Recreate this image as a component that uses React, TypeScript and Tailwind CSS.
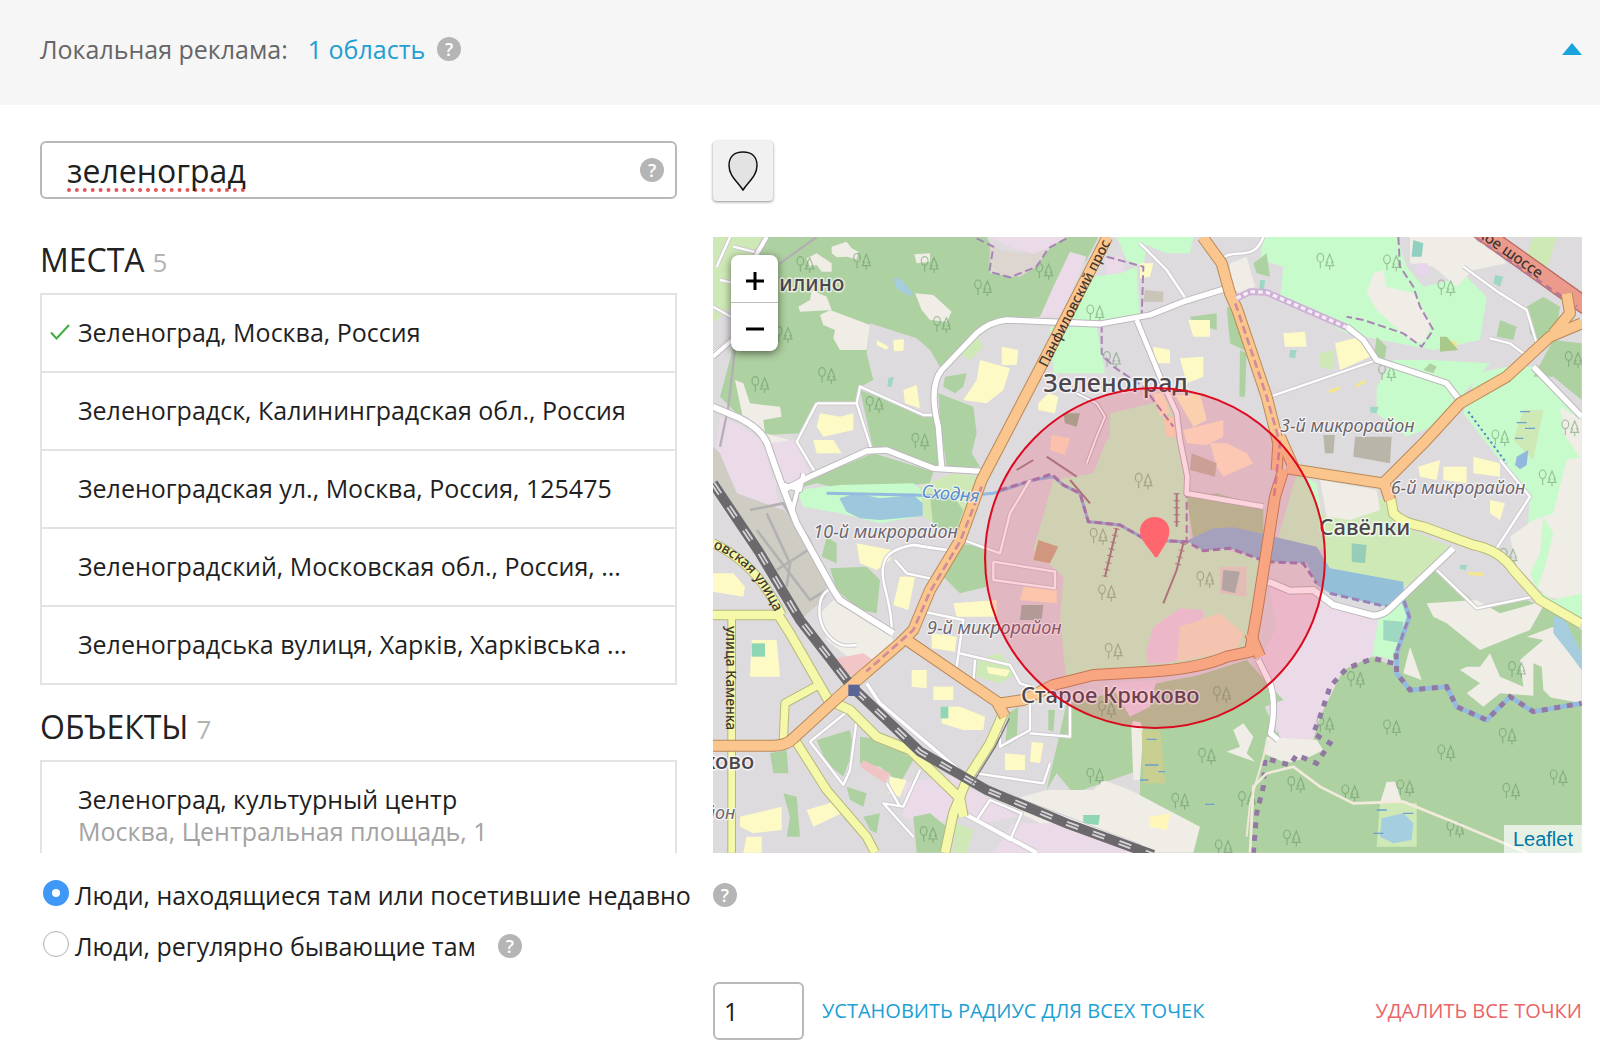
import { useState } from "react";

type Place = { title: string; note?: string; selected?: boolean };

const places: Place[] = [
  { title: "Зеленоград, Москва, Россия", selected: true },
  { title: "Зеленоградск, Калининградская обл., Россия" },
  { title: "Зеленоградская ул., Москва, Россия, 125475" },
  { title: "Зеленоградский, Московская обл., Россия, ..." },
  { title: "Зеленоградська вулиця, Харків, Харківська ..." },
];

const objects: Place[] = [
  { title: "Зеленоград, культурный центр", note: "Москва, Центральная площадь, 1" },
];

function Help({ label }: { label: string }) {
  return (
    <button
      type="button"
      aria-label={label}
      className="flex size-6 shrink-0 items-center justify-center rounded-full bg-[#b5b5b5] text-lg leading-6 font-semibold text-white"
    >
      ?
    </button>
  );
}

function Section({ title, count, items }: { title: string; count: number; items: Place[] }) {
  return (
    <section>
      <h2 className="flex h-14 items-baseline gap-2 text-[32px] leading-[46px] text-[#222]">
        {title} <span className="text-[26px] text-[#b3b3b3]">{count}</span>
      </h2>
      <ul className="border-2 border-b-0 border-[#e3e3e3]">
        {items.map((p) => (
          <li key={p.title} className="border-b-2 border-[#e3e3e3]">
            <button type="button" className="flex min-h-[76px] w-full items-center pb-0.5 text-left text-[25px] leading-8 text-[#1f1f1f]">
              <span className="flex w-9 shrink-0 justify-center">
                {p.selected && (
                  <svg width="20" height="16" viewBox="0 0 20 16" fill="none" stroke="#3fae3f" strokeWidth="2" aria-hidden="true">
                    <path d="M1 8.5 6.5 14.5 19 1" />
                  </svg>
                )}
              </span>
              <span className={p.note ? "pt-[21px] pb-5" : "truncate"}>
                {p.title}
                {p.note && <span className="block text-[#a3a3a3]">{p.note}</span>}
              </span>
            </button>
          </li>
        ))}
      </ul>
    </section>
  );
}

const C = {
  forest: "#aed1a1",
  park: "#c8fbcb",
  grass: "#cfe9b6",
  pink: "#ebdbe8",
  sand: "#f0ece6",
  water: "#a6cddd",
  build: "#fdfac6",
};

type Area = [string, string];

const areas: Area[] = [
  // upper left woods
  [C.grass, "39,351 200,351 170,430 95,560 39,610"],
  [C.forest, "200,351 860,351 880,390 870,460 940,470 1010,440 1040,395 1090,351 1195,351 1160,420 1020,590 900,600 840,630 770,705 720,740 690,690 650,655 510,610 500,700 520,780 480,800 470,850 350,850 300,940 200,945 130,900 60,830 95,700 100,570"],
  ["#dcd5d0", "870,370 900,390 960,400 1040,390 1010,440 960,470 900,465 868,440"],
  [C.pink, "870,351 1100,351 1040,385 1000,402 940,385"],
  [C.sand, "395,380 440,365 455,385 475,395 470,418 440,410 410,412 395,400"],
  [C.sand, "320,415 350,400 395,430 395,455 365,455 350,435 330,440"],
  [C.sand, "643,403 690,400 690,425 650,430"],
  [C.sand, "645,520 700,525 755,575 740,605 690,600 665,570"],
  [C.sand, "335,510 380,530 395,570 300,575 295,560 330,540"],
  [C.sand, "360,585 390,570 470,600 510,615 500,690 420,690 400,655 405,630 370,615"],
  [C.sand, "105,780 130,790 150,850 240,860 245,890 190,900 195,940 270,960 200,975 130,900"],
  [C.water, "578,475 600,475 640,520 625,528 590,505"],
  [C.pink, "1110,395 1160,410 1080,590 1020,590 1060,500"],
  [C.pink, "60,890 130,920 180,960 200,1000 225,1110 250,1180 150,1180 80,1060 50,980"],
  [C.pink, "210,970 280,960 330,1060 270,1090 240,1075"],
  [C.pink, "100,1080 230,1080 225,1110 160,1150"],
  ["#cfccc3", "39,980 60,1000 110,1120 250,1170 330,1250 380,1380 380,1430 300,1500 200,1330 39,1110"],
  [C.forest, "480,810 660,880 710,892 718,1040 620,1020 520,990"],
  [C.forest, "715,820 820,860 830,940 815,1000 840,1040 740,1045 720,900"],
  [C.forest, "735,770 800,760 790,800 765,820 730,800"],
  [C.forest, "270,1110 420,1040 520,1000 700,1055 690,1090 440,1110 350,1090"],
  [C.park, "290,1110 420,1095 640,1090 690,1130 680,1185 540,1210 420,1180 310,1160"],
  [C.grass, "660,1100 760,1060 850,1070 800,1190 740,1230 670,1190"],
  [C.forest, "690,1130 760,1130 790,1170 770,1230 700,1220"],
  ["#9cc7dc", "418,1135 470,1120 540,1135 640,1125 668,1150 668,1188 540,1200 480,1195 440,1175"],
  // northern parks
  [C.park, "1180,470 1260,460 1310,440 1320,600 1160,620 1090,600"],
  [C.park, "1050,620 1190,620 1215,760 1060,760"],
  [C.pink, "1215,410 1265,410 1275,455 1220,465"],
  [C.park, "1250,351 1480,351 1470,400 1400,400 1340,375 1330,440 1280,420"],
  [C.sand, "1590,430 1640,410 1665,500 1620,520 1590,500"],
  [C.park, "1690,351 2090,351 2120,440 2170,500 2300,470 2360,530 2340,660 2200,690 1940,640 1740,530 1750,440 1680,420"],
  [C.sand, "2020,460 2050,450 2060,500 2140,520 2175,580 2195,610 2170,670 2130,660 2030,570 2000,520"],
  [C.sand, "2130,351 2350,351 2420,430 2320,450 2270,500 2200,440 2130,430"],
  [C.grass, "2500,351 2570,351 2540,450 2470,430"],
  [C.forest, "2480,560 2530,530 2580,560 2570,630 2520,680 2490,640"],
  [C.forest, "1580,560 1610,570 1650,640 1650,700 1590,670"],
  [C.park, "2330,760 2420,740 2500,740 2645,890 2645,1290 2480,1290 2490,1120 2400,1020 2290,880"],
  [C.park, "2080,720 2200,720 2370,730 2300,810 2250,900 2120,950 2030,880 2030,800"],
  [C.forest, "2560,660 2645,670 2645,840 2560,770 2500,770"],
  [C.sand, "2580,860 2645,900 2645,1020 2590,940"],
  [C.sand, "2500,1200 2560,1180 2600,1020 2645,1010 2645,1450 2540,1430 2450,1340 2430,1250"],
  [C.park, "2530,1190 2560,1240 2535,1340 2510,1410 2560,1440 2645,1420 2645,1500 2520,1430 2490,1360 2520,1300"],
  [C.grass, "2470,870 2530,870 2500,1020 2440,960"],
  // river side and south east
  [C.grass, "1850,1190 2060,1130 2090,1210 2250,1280 2120,1400 2000,1370 1880,1340"],
  [C.sand, "1860,1080 2030,1110 2040,1170 1950,1200 1880,1190"],
  [C.park, "1790,1060 1850,1090 1880,1290 1730,1270"],
  [C.forest, "1550,1120 1690,1160 1690,1270 1480,1260 1460,1130"],
  [C.forest, "2120,1410 2200,1340 2340,1460 2480,1440 2550,1470 2645,1530 2645,2198 1320,2198 1320,1950 1120,2020 1070,1960 1040,2010 1100,1750 1420,1680 1640,1640 1730,1840 1900,1640 2020,1610 2080,1640"],
  [C.park, "2035,1500 2110,1440 2130,1500 2085,1620 2015,1605"],
  ["#9fd8c0", "2050,1500 2110,1505 2105,1570 2050,1560"],
  [C.pink, "1705,1385 1770,1412 1850,1415 1900,1455 2035,1490 2015,1610 1930,1650 1860,1790 1840,1860 1740,1860 1710,1720 1680,1620 1730,1520"],
  [C.sand, "1700,1850 1850,1860 1870,1890 1830,1910 1760,1930 1690,1900"],
  [C.sand, "2180,1450 2330,1440 2400,1480 2540,1440 2490,1530 2340,1590 2240,1510 2200,1490"],
  [C.sand, "2130,1580 2165,1680 2110,1660"],
  [C.sand, "2300,1640 2340,1640 2370,1600 2400,1670 2470,1700 2460,1620 2530,1560 2480,1550 2560,1520 2645,1650 2645,1750 2540,1730 2400,1720 2350,1760 2300,1720 2340,1690 2280,1650"],
  [C.forest, "2500,1630 2525,1640 2530,1710 2560,1740 2500,1730"],
  [C.water, "2560,1490 2590,1490 2645,1600 2645,1650 2600,1590 2560,1540"],
  [C.sand, "1600,1830 1630,1810 1660,1850 1640,1900 1665,1925 1580,1895 1620,1880"],
  [C.sand, "1290,1720 1330,1830 1320,1980 1300,1980"],
  [C.sand, "1040,2010 1180,2010 1210,1980 1290,2010 1500,2120 1480,2198 1200,2198 900,2050"],
  [C.sand, "2040,2050 2060,1985 2085,1985 2105,2045"],
  [C.grass, "2040,2050 2150,2050 2150,2180 2030,2180"],
  ["#a5cfe0", "2045,2095 2110,2080 2140,2110 2135,2160 2080,2170 2040,2150"],
  ["#c9cf90", "1325,1830 1380,1830 1395,1990 1330,1990"],
  // central park
  [C.park, "1390,830 1440,900 1460,1100 1470,1260 1690,1320 1670,1500 1650,1590 1400,1650 1180,1660 1100,1690 1080,1500 1090,1370 1000,1290 1060,1080 1180,1060 1220,960"],
  [C.park, "1230,880 1400,840 1440,930 1400,1000 1230,1000"],
  [C.forest, "1420,1690 1640,1620 1750,1740 1500,1830 1200,1790 1250,1700"],
  [C.forest, "1100,1750 1200,1790 1300,1800 1290,1830 1110,1800"],
  [C.pink, "1340,1590 1360,1520 1440,1465 1510,1470 1500,1600 1400,1630 1340,1630"],
  [C.pink, "1230,1690 1370,1680 1350,1760 1290,1790"],
  ["#f7ecc8", "1440,1520 1560,1480 1630,1540 1610,1590 1430,1625"],
  ["#e0e3cf", "1560,1340 1640,1340 1640,1430 1560,1420"],
  ["#a4c4b8", "1570,1350 1620,1355 1605,1420 1565,1410"],
  // south west
  [C.sand, "400,1440 570,1540 590,1580 480,1640 380,1560 360,1480"],
  ["#f2c6c6", "410,1615 490,1600 520,1620 460,1670 420,1650"],
  [C.pink, "610,1990 780,1960 780,2030 720,2120 610,2090"],
  [C.pink, "800,2000 860,2030 950,2090 850,2110 790,2060"],
  [C.pink, "940,2110 1160,2110 1340,2198 880,2198"],
  [C.forest, "480,1850 560,1860 640,1920 600,1990 540,1940 480,1930"],
  [C.forest, "350,1860 450,1830 460,1890 430,1970 380,1930"],
  [C.forest, "210,1900 260,1890 265,1960 220,1960"],
  [C.forest, "250,2020 290,2030 300,2150 260,2150 270,2090"],
  [C.forest, "640,2090 690,2080 740,2120 730,2198 650,2198"],
  [C.forest, "390,1345 500,1340 540,1380 530,1480 480,1470 410,1410"],
  [C.forest, "760,1270 860,1280 860,1400 780,1420 730,1370"],
  [C.grass, "820,1620 900,1600 950,1660 900,1690 830,1670"],
  // courtyards
  [C.forest, "380,1250 410,1270 410,1330 365,1310"],
  [C.grass, "780,700 830,640 850,680 810,720"],
  [C.forest, "925,1780 955,1760 950,1860 915,1880"],
  [C.forest, "1045,1770 1065,1770 1060,1835 1045,1830"],
  [C.forest, "440,2000 500,2020 490,2060 450,2040"],
  [C.forest, "490,2090 540,2080 530,2140 510,2130"],
  [C.grass, "770,2110 820,2130 800,2198 760,2198"],
  [C.forest, "1470,590 1550,580 1550,630 1480,610"],
  [C.forest, "1620,690 1640,700 1635,830 1618,830"],
  [C.forest, "2030,650 2060,680 2050,740 2020,720"],
  [C.forest, "2190,730 2210,740 2200,760 2170,750"],
  [C.grass, "1860,700 1905,690 1900,750 1860,740"],
  [C.forest, "2400,600 2450,620 2440,660 2390,650"],
  [C.forest, "1660,430 1700,400 1710,470 1670,460"],
];

const buildings: Area[] = [
  [C.build, "840,720 930,745 910,810 860,850 790,840 830,780"],
  [C.build, "905,680 955,690 950,735 905,735"],
  [C.build, "1015,850 1045,820 1075,830 1065,880 1015,870"],
  [C.build, "360,880 420,890 460,880 460,930 370,950 350,920"],
  [C.build, "340,960 400,960 425,1000 350,1000"],
  [C.build, "610,810 650,795 660,865 615,850"],
  [C.build, "1425,825 1500,820 1520,900 1480,920"],
  [C.build, "1360,680 1410,690 1410,730 1360,730"],
  [C.build, "1440,715 1510,710 1510,770 1460,790"],
  [C.build, "1465,600 1530,600 1530,650 1480,650"],
  [C.build, "1750,640 1815,635 1820,680 1755,680"],
  [C.build, "1905,670 1980,650 2010,710 1920,750"],
  [C.build, "2155,1040 2220,1020 2210,1080 2160,1070"],
  [C.build, "2230,1040 2300,1040 2300,1090 2230,1080"],
  [C.build, "2320,1010 2400,1030 2400,1070 2320,1060"],
  [C.build, "2370,1140 2415,1150 2400,1200 2370,1180"],
  ["#ffedc8", "1360,820 1390,820 1410,880 1380,890"],
  ["#ffe6c0", "1390,890 1430,890 1430,950 1400,950"],
  ["#ffefcc", "1450,930 1570,900 1570,950 1520,975 1460,970"],
  ["#ffefcc", "1530,970 1580,970 1640,1000 1660,1030 1570,1070 1550,1040"],
  ["#ffe8c4", "1055,945 1110,955 1095,1005 1050,990"],
  ["#9fb898", "1090,880 1140,880 1130,920 1095,910"],
  ["#c2bda8", "1475,1000 1550,1030 1545,1070 1470,1050"],
  ["#b9b5a8", "1965,950 2075,950 2070,1030 1960,1010"],
  ["#b9b5a8", "1870,945 1905,945 1900,1000 1875,1000"],
  [C.build, "470,1270 575,1290 570,1320 530,1350 480,1330"],
  [C.build, "600,1370 645,1370 625,1470 580,1455"],
  [C.build, "760,1450 890,1440 890,1490 770,1490"],
  [C.build, "695,1540 770,1550 765,1595 695,1585"],
  [C.build, "39,1360 100,1360 135,1400 130,1430 39,1415"],
  [C.build, "155,1560 230,1560 240,1670 150,1670"],
  [C.build, "635,1650 680,1650 680,1705 635,1700"],
  [C.build, "700,1700 760,1700 760,1740 700,1740"],
  [C.build, "725,1760 780,1760 855,1790 850,1830 790,1830 725,1810"],
  [C.build, "915,1900 975,1905 975,1950 915,1950"],
  [C.build, "995,1865 1030,1870 1020,1930 990,1925"],
  [C.build, "120,2090 245,2060 245,2130 160,2140 120,2120"],
  [C.build, "320,2070 420,2040 425,2080 340,2120"],
  [C.build, "570,1970 620,1980 600,2030 565,2020"],
  ["#f0c4c4", "490,1920 570,1960 555,1990 480,1940"],
  ["#8fd6b4", "155,1570 195,1570 195,1610 155,1610"],
  ["#8fd6b4", "722,1760 745,1760 745,1795 722,1795"],
  ["#8fd6b4", "1150,2085 1200,2085 1195,2115 1150,2110"],
  ["#fff6b8", "1350,2090 1410,2080 1400,2130 1350,2120"],
  ["#ffecc0", "970,1400 1070,1405 1070,1450 960,1440"],
  ["#a3b8a8", "965,1455 1030,1455 1025,1500 960,1500"],
  ["#c9b38a", "1015,1260 1075,1280 1050,1330 1000,1320"],
  ["#8fd0c0", "2140,360 2170,370 2165,410 2135,410"],
  ["#e9d6ee", "2150,430 2185,430 2180,465 2150,465"],
  [C.build, "1320,430 1360,430 1350,470 1320,475"],
  ["#f5e58a", "2220,660 2270,665 2270,680 2220,678"],
  ["#a9c98a", "2220,650 2240,650 2275,690 2220,695"],
  ["#97cdb8", "1955,1270 2000,1275 1995,1330 1955,1325"],
  [C.build, "530,660 565,680 560,690 530,675"],
  [C.build, "580,660 612,658 610,692 582,694"],
  [C.build, "140,2150 185,2150 185,2198 130,2198"],
  [C.build, "860,1640 930,1650 920,1670 865,1660"],
  ["#9fd6c4", "565,775 582,770 575,800 562,800"],
  ["#9fd6c4", "1680,480 1695,480 1692,510 1678,508"],
  ["#9fd6c4", "1770,690 1790,690 1785,715 1768,712"],
  ["#9fd6c4", "2385,465 2410,470 2400,500 2380,490"],
  ["#9fd6c4", "2010,860 2035,860 2030,880 2012,878"],
  ["#f5e88a", "1885,810 1920,800 1922,808 1888,820"],
  ["#f5e88a", "1965,795 1995,780 1998,788 1968,802"],
  ["#f5e88a", "2305,1355 2350,1358 2350,1368 2305,1365"],
  ["#9fd6c4", "2280,1335 2300,1335 2298,1350 2280,1348"],
  ["#c9c5b8", "1335,510 1390,515 1390,545 1330,545"],
];

type RoadDef = { d: string; w?: number };

const lanes: RoadDef[] = [
  { d: "M39 560 110 600M39 700 100 650M60 480 150 500M90 351 50 440M100 380 180 400" },
  { d: "M350 850H470L480 800 670 885H710M350 850 290 965 350 1065M470 850 515 990" },
  { d: "M575 1540C580 1440 530 1380 555 1320 570 1290 610 1280 640 1275L740 1290" },
  { d: "M585 1320 620 1360 690 1375M645 1275 700 1285M790 1260 900 1300 930 1180 990 1080" },
  { d: "M880 1325 1065 1355V1405L880 1380V1325" },
  { d: "M670 1475 790 1500 770 1640M780 1600 930 1635 960 1690 990 1700V1830L900 1880V1830M825 1620 820 1690" },
  { d: "M990 1840 1110 1850V1740M1050 1930 1030 1990 830 1960" },
  { d: "M470 1800 450 1950 430 1995 330 1865 460 1760" },
  { d: "M660 1950 610 2060 550 2050 640 2150M560 1990 600 2060" },
  { d: "M385 1410C350 1430 350 1500 380 1540S440 1580 470 1575" },
  { d: "M500 1690 540 1750 800 1970 900 2020 1320 2180", w: 10 },
  { d: "M790 2080 1010 2198", w: 12 },
  { d: "M870 2040 965 2080 930 2160 830 2100Z" },
  { d: "M1320 370 1400 450 1460 540M1560 420C1600 380 1660 430 1690 351" },
  { d: "M1710 830 2030 720M2290 440 2400 520 2480 570 2510 670 2470 720" },
  { d: "M2370 655 2430 670 2470 700M2400 1020 2490 1130 2380 1300" },
  { d: "M2210 1350 2330 1465 2500 1430" },
];

const whites: RoadDef[] = [
  { d: "M39 860 120 895Q190 930 205 980L240 1080 290 1210 400 1410 420 1440 580 1540" },
  { d: "M250 1110 330 1070 500 993 560 990 700 1045 860 1055", w: 16 },
  { d: "M725 1045 715 920Q685 800 725 750L830 640Q870 605 920 600L1200 612 1350 585 1450 545 1570 508", w: 16 },
  { d: "M1310 600 1380 770 1430 880 1440 960 1462 1070 1460 1120 1690 1160", w: 14 },
  { d: "M1940 620 1990 660 2030 720 2240 790 2290 855", w: 16 },
  { d: "M2500 740 2645 890", w: 16 },
  { d: "M1705 1385 1770 1412 1840 1410 1900 1455 2020 1487Q2050 1485 2070 1465L2260 1285", w: 18 },
  { d: "M1675 1620 1710 1690Q1730 1750 1712 1840L1735 1860", w: 16 },
  { d: "M300 1080 275 1180M240 1090 300 1110 310 1060", w: 12 },
  { d: "M39 710 120 640M200 351 130 470", w: 12 },
  { d: "M1130 820 1190 850 1215 890 1190 950 1160 1030", w: 6 },
];

const yellows: RoadDef[] = [
  { d: "M39 1485H235L270 1540 385 1740 450 1770 530 1850 630 1890 780 2035 790 2090" },
  { d: "M39 1270Q170 1330 245 1485", w: 24 },
  { d: "M95 1490V2198", w: 20 },
  { d: "M910 1780 870 1870 800 1980 760 2080 735 2198" },
  { d: "M285 1860 380 2010 500 2150 525 2198", w: 24 },
  { d: "M250 1860 255 1750 365 1690", w: 22 },
  { d: "M2065 1090 2080 1180Q2110 1210 2170 1220L2320 1275Q2400 1290 2440 1350L2520 1440 2645 1512" },
];

const oranges: RoadDef[] = [
  { d: "M1222 351 1020 745 845 1080 780 1260 690 1410 640 1530 600 1570 460 1690 280 1855Q260 1877 220 1877L39 1877" },
  { d: "M620 1560 890 1745 915 1790" },
  { d: "M900 1750 970 1740 1060 1695 1180 1665 1350 1655Q1500 1645 1580 1610L1650 1595 1672 1470 1700 1290 1725 1130 1750 1050" },
  { d: "M1730 1050 1735 970 1700 830 1612 570 1590 520 1565 430 1508 351" },
  { d: "M1740 950 1780 1040M1650 1540 1680 1610" },
  { d: "M1760 1045 2050 1090 2090 1050 2170 970 2280 850 2420 770 2550 650 2645 610M2560 640 2610 580 2600 520M2050 1080 2070 1140" },
];

function Roads({ list, color, edge, width }: { list: RoadDef[]; color: string; edge: string; width: number }) {
  return (
    <g fill="none" strokeLinejoin="round">
      {list.map((r) => (
        <path key={"e" + r.d} d={r.d} stroke={edge} strokeWidth={(r.w ?? width) + 6} />
      ))}
      {list.map((r) => (
        <path key={r.d} d={r.d} stroke={color} strokeWidth={r.w ?? width} />
      ))}
    </g>
  );
}

const trees: [number, number][] = [
  [315, 435], [485, 425], [688, 435], [848, 505], [1032, 455], [725, 615], [1185, 580], [380, 768], [180, 795], [523, 855], [660, 965], [250, 645],
  [1875, 425], [2075, 430], [2238, 505], [2060, 760], [2400, 955], [2610, 925], [2542, 1075], [2620, 720], [1235, 720], [1330, 1085], [1195, 1250],
  [1220, 1420], [1240, 1595], [1515, 1380], [1565, 1725], [1220, 1770], [1967, 1680], [2075, 1825], [2238, 1900], [2422, 1850], [1520, 1910], [1440, 2045],
  [1788, 1995], [2115, 2005], [2433, 2015], [2575, 1975], [1775, 2155], [1570, 2185], [1950, 2020], [1185, 1970], [685, 2145], [1875, 1815], [2450, 1650],
  [2425, 1310], [2265, 2130], [1640, 2040],
];

const railway = "M39 1090 180 1300 300 1500 455 1700 660 1895 860 2010 1100 2110 1360 2205";

function CityMap() {
  return (
    <svg
      className="block size-full"
      viewBox="39 351 2607 1848"
      preserveAspectRatio="xMidYMid slice"
      role="img"
      aria-label="Карта: Зеленоград"
      fontFamily="'Noto Sans', 'Open Sans', sans-serif"
    >
      <defs>
        <g id="trees" fill="none" stroke="#5f8f62" strokeOpacity=".5" strokeWidth="3.5">
          <ellipse cx="-14" cy="-12" rx="10" ry="13" />
          <path d="M-14 2V20M14 -22 4 2 8 2 2 12H26L20 2 24 2ZM14 12V24" />
        </g>
        <path id="street-curve" d="M38 1284C126 1319 181 1386 218 1464L250 1530" />
      </defs>
      <rect x="39" y="351" width="2607" height="1848" fill="#dedbde" />
      {areas.map(([fill, points], i) => (
        <polygon key={i} fill={fill} points={points} />
      ))}
      {buildings.map(([fill, points], i) => (
        <polygon key={i} fill={fill} points={points} />
      ))}
      <g fill="none" stroke="#b3b1b1" strokeWidth="8">
        <path d="M150 1170 250 1150 380 1380M170 1230 330 1440 380 1410M200 1180 270 1330 260 1400M230 1350 340 1280" />
      </g>
      {trees.map(([x, y]) => (
        <use key={x + "-" + y} href="#trees" x={x} y={y} />
      ))}
      {/* water courses */}
      <path fill="#93c0d8" d="M1460 1262 1540 1225 1600 1222 1680 1240 1850 1280 1890 1345 2110 1385 2112 1435 2060 1460 1890 1420 1850 1395 1820 1330 1700 1325 1590 1285 1510 1292Z" />
      <g fill="none">
        <path stroke="#93bbe0" strokeWidth="9" d="M380 1120 640 1125 760 1130 880 1120 1000 1080 1060 1070 1090 1095 1140 1120 1165 1205 1260 1215 1340 1260 1460 1265" />
        <path stroke="#93bbe0" strokeWidth="14" d="M2110 1440 2128 1490 2090 1600 2090 1660 2130 1710 2240 1700 2270 1760 2360 1800 2430 1730 2500 1775 2645 1750" />
        <g stroke="#9a83b8" strokeWidth="9" strokeDasharray="22 12">
          <path d="M900 1110 1000 1080 1055 1062 1090 1095 1140 1120 1165 1205 1260 1215 1340 1260 1460 1265 1510 1292 1590 1285 1700 1325 1810 1330 1850 1390" />
          <path d="M1890 1420 2060 1460 2110 1435 2128 1490 2088 1600" />
        </g>
        <g stroke="#9179a3" strokeWidth="15" strokeDasharray="18 20">
          <path d="M2088 1600 2090 1660 2130 1710 2240 1700 2270 1760 2360 1800 2430 1730 2500 1775 2645 1750" />
          <path d="M2080 1630 2020 1615 1940 1645 1890 1700 1860 1790 1840 1840 1890 1870 1850 1930 1790 1905 1770 1935 1695 1915 1690 2000 1670 2080 1660 2198" />
        </g>
        <path stroke="#f2eadb" strokeWidth="8" d="M1650 2198 1660 2000 1700 1960 1780 1940 1860 2000 1960 2050 2110 2045 2270 2110 2480 2198" />
        <path stroke="#eee7d9" strokeWidth="6" d="M1705 1860 1650 2050 1640 2150" />
        <g stroke="#a985b5" strokeWidth="6" strokeDasharray="24 11">
          <path d="M830 355 880 380 868 455 930 472 1010 440 1045 385 1100 355" />
          <path d="M1220 410 1330 440 1325 590 1205 615 1205 700 1240 740 1330 800 1420 920M1460 1110V1270" />
          <path d="M2095 351 2100 440 2140 500 2160 560 2200 630 2165 680 2110 640 1990 600 1940 590" />
        </g>
        <g stroke="#a08488" strokeWidth="6">
          <path d="M1250 1225 1215 1370M1450 1270 1430 1350 1390 1450M1110 1080 1170 1150M1430 1120 1430 1220M950 1050 1000 1020M1040 1010 1130 1070" />
          <path strokeWidth="18" strokeDasharray="3 18" d="M1250 1225 1215 1370M1450 1270 1430 1350M1430 1120V1220" />
        </g>
        <path stroke="#5586c4" strokeWidth="6" strokeDasharray="7 9" d="M2305 875 2420 1030" />
        <path stroke="#6a9fd0" strokeWidth="4" d="M2460 875H2490M2450 908H2480M2475 925H2505M2445 955H2470M1340 1858H1370M1335 1935H1375M1375 1955H1395M1320 1980H1345M2030 2070H2060M2110 2080H2140M2020 2140H2050M1515 2053H1543" />
      </g>
      <path fill="#93b8dd" d="M2450 1010 2485 990 2480 1035 2460 1048 2445 1035Z" />
      <path fill="none" stroke="#b3b0b3" strokeWidth="7" d="M350 351 240 430M105 690 85 860 60 980" />
      <Roads list={lanes} color="#ffffff" edge="#cfcbcf" width={7} />
      <Roads list={whites} color="#ffffff" edge="#bdb8bd" width={18} />
      <Roads list={yellows} color="#f5f7a9" edge="#b5b87c" width={26} />
      <path stroke="#b86c62" strokeWidth="54" d="M2330 325 2660 560" />
      <path stroke="#ec9a8c" strokeWidth="46" d="M2330 325 2660 560" />
      <path stroke="#b9799a" strokeWidth="9" strokeDasharray="20 16" d="M2330 355 2630 560" />
      <Roads list={oranges} color="#fbc58e" edge="#b98a58" width={30} />
      <g fill="none" stroke="#d08c98" strokeWidth="8" strokeDasharray="24 12">
        <path d="M845 1100 780 1265 690 1415 640 1530 470 1680" />
        <path d="M1606 550 1700 830 1740 970 1722 1130" />
      </g>
      <path fill="none" stroke="#cfb0d6" strokeWidth="20" d="M1610 535 1650 515 1700 517 1940 622" />
      <path fill="none" stroke="#f4ecf6" strokeWidth="10" strokeDasharray="14 9" d="M1610 535 1650 515 1700 517 1940 622" />
      {/* railway */}
      <g fill="none">
        <path stroke="#6b696b" strokeWidth="30" d={railway} />
        <path stroke="#d6d3d6" strokeWidth="15" strokeDasharray="38 46" d={railway} />
        <path stroke="#6b696b" strokeWidth="4" d={railway} />
      </g>
      <path stroke="#fbc58e" strokeWidth="30" d="M405 1740 500 1655" />
      <rect x="445" y="1694" width="34" height="34" fill="#596597" />
      <path stroke="#77757a" strokeWidth="4" d="M928 1795 886 1880 816 1992" fill="none" />

      {/* labels */}
      <g fill="#4c474e" stroke="#ffffff" strokeOpacity=".7" strokeWidth="9" strokeLinejoin="round" paintOrder="stroke">
        <g fontSize="66" fontWeight="500">
          <text x="238" y="512" fontSize="63">илино</text>
          <text x="1030" y="817" fontSize="75">Зеленоград</text>
          <text x="1858" y="1245">Савёлки</text>
          <text x="963" y="1749">Старое Крюково</text>
          <text x="10" y="1948">ково</text>
        </g>
        <g fontSize="54" fontStyle="italic" fill="#6d666e" strokeWidth="7">
          <text x="1740" y="935">3-й микрорайон</text>
          <text x="2072" y="1122">6-й микрорайон</text>
          <text x="340" y="1254">10-й микрорайон</text>
          <text x="681" y="1542">9-й микрорайон</text>
          <text x="14" y="2096">йон</text>
          <text transform="translate(664 1132) rotate(5)" fill="#5b8cc9">Сходня</text>
        </g>
        <g fontSize="42" fontWeight="500" fill="#3f3830" strokeOpacity="0">
          <text transform="translate(1040 744) rotate(-63)">Панфиловский прос</text>
          <text transform="translate(78 1518) rotate(90)">улица Каменка</text>
          <text transform="translate(2312 334) rotate(35)" fontSize="45">ское шоссе</text>
          <text><textPath href="#street-curve">овская улица</textPath></text>
        </g>
      </g>

      {/* selected area */}
      <circle cx="1365" cy="1314" r="510" fill="#f02850" fillOpacity=".2" stroke="#dc0a1e" strokeWidth="6" />
      <path fill="#ff666d" d="M1365 1312C1350 1285 1320 1262 1320 1232A43 40 0 0 1 1408 1232C1408 1265 1385 1285 1372 1312Z" />
    </svg>
  );
}

export default function App() {
  const [query, setQuery] = useState("зеленоград");
  const [radius, setRadius] = useState("1");
  const [audience, setAudience] = useState("recent");

  const options = [
    { id: "recent", label: "Люди, находящиеся там или посетившие недавно" },
    { id: "regular", label: "Люди, регулярно бывающие там" },
  ];

  return (
    <div className="min-h-screen bg-white font-['Open_Sans','Noto_Sans',sans-serif] text-[#1f1f1f]">
      <header className="flex h-[105px] items-center bg-[#f6f6f6] pr-[18px] pb-2 pl-10 text-[25px] leading-9">
        <span className="text-[#666]">Локальная реклама:</span>
        <a href="#area" className="ml-5 text-[#209fd4]">1 область</a>
        <span className="ml-3 flex"><Help label="О локальной рекламе" /></span>
        <button type="button" aria-label="Свернуть" className="ml-auto text-[#19a3dc]">
          <svg width="20" height="12" viewBox="0 0 20 12" fill="currentColor" aria-hidden="true"><path d="M10 0 20 12H0Z" /></svg>
        </button>
      </header>

      <main className="grid grid-cols-[637fr_869fr] gap-x-9 pt-9 pr-[18px] pl-10">
        <div className="flex h-[58px] items-center rounded-md border-2 border-[#b9b9b9] pr-[11px] pl-[25px]">
          <input
            aria-label="Поиск места"
            value={query}
            spellCheck={false}
            onChange={(e) => setQuery(e.target.value)}
            className="h-full min-w-0 flex-1 text-[32px] leading-[48px] underline decoration-[#e0565b] decoration-dotted decoration-4 underline-offset-[6px] outline-none [text-decoration-skip-ink:none]"
          />
          <Help label="О поиске" />
        </div>
        <div>
          <button type="button" aria-label="Поставить точку" className="flex size-[60px] items-center justify-center rounded bg-[#f1f1f1] shadow-[0_1px_3px_rgba(0,0,0,0.45)]">
            <svg width="30" height="40" viewBox="0 0 30 40" fill="#e3e3e3" stroke="#111" strokeWidth="1.5" aria-hidden="true">
              <path d="M15 39C10 31 1 25 1 14.500C1 6 6 1 15 1S29 6 29 14.500C29 25 20 31 15 39Z" />
            </svg>
          </button>
        </div>

        <div className="mt-9 flex h-[616px] flex-col gap-[19px] overflow-hidden">
          <Section title="МЕСТА" count={5} items={places} />
          <Section title="ОБЪЕКТЫ" count={7} items={objects} />
        </div>
        <div className="relative mt-9 h-[616px] overflow-hidden">
          <CityMap />
          <div className="absolute top-[18px] left-[18px] flex w-[47px] flex-col divide-y divide-[#bbb] rounded-lg bg-white shadow-[0_2px_8px_rgba(0,0,0,0.55)]">
            {[
              { label: "Приблизить", d: "M0 9H18M9 0V18" },
              { label: "Отдалить", d: "M0 9H18" },
            ].map((z) => (
              <button key={z.label} type="button" aria-label={z.label} className="flex h-12 items-center justify-center pt-1">
                <svg width="18" height="18" viewBox="0 0 18 18" stroke="#000" strokeWidth="3" aria-hidden="true"><path d={z.d} /></svg>
              </button>
            ))}
          </div>
          <a href="#leaflet" className="absolute right-0 bottom-0 bg-white/70 px-[9px] font-['Liberation_Sans',sans-serif] text-xl leading-7 text-[#0078a8]">
            Leaflet
          </a>
        </div>
      </main>

      <fieldset className="flex flex-col gap-[15px] pt-6 pl-[43px] text-[25px] leading-9">
        {options.map((o) => (
          <div key={o.id} className="flex items-center">
            <input
              type="radio"
              id={o.id}
              name="audience"
              checked={audience === o.id}
              onChange={() => setAudience(o.id)}
              className="mb-1 size-[26px] appearance-none rounded-full border border-[#b0b0b0] bg-white checked:border-[9px] checked:border-[#3f97f6]"
            />
            <label htmlFor={o.id} className="ml-1.5">{o.label}</label>
            <span className="ml-[22px] flex"><Help label={"Подробнее: " + o.label} /></span>
          </div>
        ))}
      </fieldset>

      <footer className="grid grid-cols-[637fr_869fr] gap-x-9 pt-[18px] pr-[18px] pl-10">
        <div className="col-start-2 flex items-center">
          <input
            aria-label="Радиус, км"
            value={radius}
            onChange={(e) => setRadius(e.target.value)}
            className="h-[58px] w-[91px] rounded-md border-2 border-[#b9b9b9] px-[9px] text-[25px] outline-none"
          />
          <button type="button" className="ml-[18px] text-xl text-[#209fd4]">УСТАНОВИТЬ РАДИУС ДЛЯ ВСЕХ ТОЧЕК</button>
          <button type="button" className="ml-auto text-xl text-[#ea6468]">УДАЛИТЬ ВСЕ ТОЧКИ</button>
        </div>
      </footer>
    </div>
  );
}
